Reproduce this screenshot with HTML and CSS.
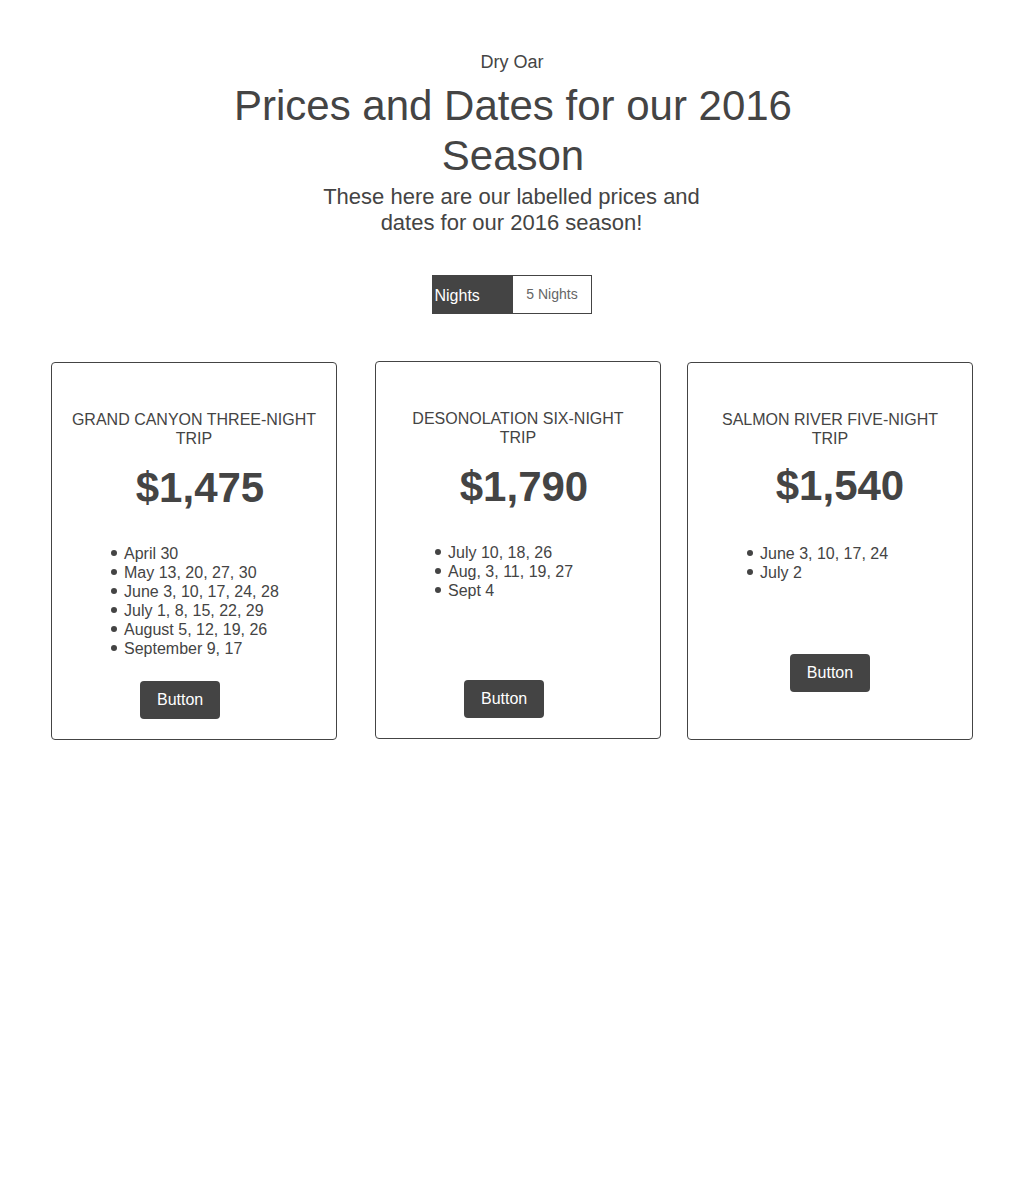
FILE: index.html
```html
<!DOCTYPE html>
<html lang="en">
<head>
<meta charset="utf-8">
<title>Dry Oar — Prices and Dates</title>
<link rel="stylesheet" href="styles.css">
</head>
<body>
  <header class="hero">
    <div class="brand">Dry Oar</div>
    <h1 class="hero-title">Prices and Dates for our 2016 Season</h1>
    <p class="hero-sub">These here are our labelled prices and dates for our 2016 season!</p>
  </header>

  <div class="tabs">
    <div class="tab tab-active">Nights</div>
    <div class="tab tab-idle">5 Nights</div>
  </div>

  <section class="cards">
    <article class="card card-one">
      <h2 class="card-title">Grand Canyon three-night trip</h2>
      <div class="price">$1,475</div>
      <ul class="dates">
        <li>April 30</li>
        <li>May 13, 20, 27, 30</li>
        <li>June 3, 10, 17, 24, 28</li>
        <li>July 1, 8, 15, 22, 29</li>
        <li>August 5, 12, 19, 26</li>
        <li>September 9, 17</li>
      </ul>
      <a class="btn btn-left" href="#">Button</a>
    </article>

    <article class="card card-two">
      <h2 class="card-title">Desonolation six-night trip</h2>
      <div class="price">$1,790</div>
      <ul class="dates">
        <li>July 10, 18, 26</li>
        <li>Aug, 3, 11, 19, 27</li>
        <li>Sept 4</li>
      </ul>
      <a class="btn btn-left" href="#">Button</a>
    </article>

    <article class="card card-three">
      <h2 class="card-title">Salmon River five-night trip</h2>
      <div class="price price-wide">$1,540</div>
      <ul class="dates dates-low">
        <li>June 3, 10, 17, 24</li>
        <li>July 2</li>
      </ul>
      <a class="btn btn-center" href="#">Button</a>
    </article>
  </section>
</body>
</html>
```

FILE: styles.css
```css
* {
  box-sizing: border-box;
}

html, body {
  margin: 0;
  padding: 0;
  background: #ffffff;
}

body {
  font-family: "Liberation Sans", Arial, sans-serif;
  color: #444444;
  font-size: 16px;
  line-height: 19px;
}

.hero {
  padding-top: 52px;
  display: flex;
  flex-direction: column;
  align-items: center;
  text-align: center;
}

.brand {
  font-size: 18px;
  line-height: 20px;
  padding-left: 1px;
}

.hero-title {
  margin: 9px 0 0;
  max-width: 600px;
  font-size: 42px;
  line-height: 50px;
  font-weight: 400;
  padding-left: 3px;
}

.hero-sub {
  margin: 3px 0 0;
  max-width: 400px;
  font-size: 22px;
  line-height: 26px;
}

.tabs {
  margin: 39px auto 0;
  display: flex;
  width: 160px;
  height: 39px;
}

.tab {
  height: 39px;
  display: flex;
  align-items: center;
}

.tab-active {
  width: 81px;
  background: #444444;
  color: #ffffff;
  font-size: 16px;
  padding-left: 3px;
  padding-top: 1px;
}

.tab-idle {
  width: 79px;
  border: 1px solid #444444;
  border-left: 0;
  color: #666666;
  font-size: 14px;
  justify-content: center;
  padding-left: 1px;
}

.cards {
  margin-top: 48px;
  padding-left: 51px;
  display: flex;
  align-items: stretch;
}

.card {
  width: 286px;
  border: 1px solid #444444;
  border-radius: 4px;
  padding: 47px 18px 20px;
  display: flex;
  flex-direction: column;
}

.card-two {
  margin-left: 38px;
  margin-top: -1px;
  margin-bottom: 1px;
}

.card-three {
  margin-left: 26px;
}

.card-title {
  margin: 0;
  font-size: 16px;
  line-height: 19px;
  font-weight: 400;
  text-transform: uppercase;
  text-align: center;
}

.price {
  margin-top: 15px;
  font-size: 42px;
  line-height: 50px;
  font-weight: 700;
  text-align: center;
  padding-left: 12px;
}

.price-wide {
  margin-top: 13px;
  padding-left: 20px;
}

.dates {
  margin: 31px 0 23px;
  padding: 0 0 0 54px;
  list-style: none;
  font-size: 16px;
  line-height: 19px;
}

.dates li::before {
  content: "";
  display: inline-block;
  width: 6px;
  height: 6px;
  border-radius: 50%;
  background: #444444;
  margin-left: -13px;
  margin-right: 7px;
  vertical-align: 3px;
}

.dates-low {
  margin-top: 33px;
}

.btn {
  margin-top: auto;
  display: inline-block;
  height: 38px;
  padding: 0 17px;
  line-height: 38px;
  background: #444444;
  color: #ffffff;
  text-decoration: none;
  border-radius: 4px;
  font-size: 16px;
}

.btn-left {
  align-self: flex-start;
  margin-left: 70px;
}

.btn-center {
  align-self: center;
  margin-bottom: 27px;
}
```
